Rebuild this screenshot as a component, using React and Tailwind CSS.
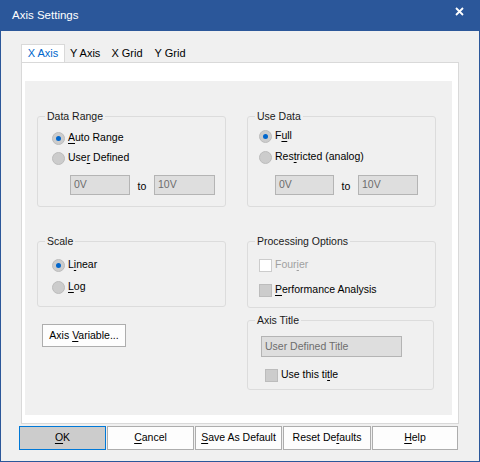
import React from 'react';

const font = { fontFamily: '"Liberation Sans", Arial, sans-serif' };

// label with one underlined access key
function Mn({ text, at }) {
    return (
        <span>
            {text.slice(0, at)}
            <span className="underline underline-offset-[2px] decoration-[1px]">{text[at]}</span>
            {text.slice(at + 1)}
        </span>
    );
}

function Radio({ checked, text, at }) {
    return (
        <div className="flex h-[16px] items-center gap-[3px]">
            <span className="flex h-[13px] w-[13px] items-center justify-center rounded-full border border-[#bcbcbc] bg-[#cccccc]">
                {checked && <span className="h-[5px] w-[5px] rounded-full bg-[#0066cc]"></span>}
            </span>
            <Mn text={text} at={at} />
        </div>
    );
}

function Check({ text, at, disabled }) {
    return (
        <div className={`flex h-[16px] items-center gap-[3px] ${disabled ? 'text-[#a0a0a0]' : 'text-black'}`}>
            <span className={`h-[13px] w-[13px] border ${disabled ? 'border-[#cccccc] bg-white' : 'border-[#bcbcbc] bg-[#cccccc]'}`}></span>
            <Mn text={text} at={at} />
        </div>
    );
}

// group box: caption sits over the top border
function Group({ title, className, children }) {
    return (
        <div className={`relative rounded-[3px] border border-[#dcdcdc] ${className}`}>
            <span className="absolute left-[7px] top-[-7px] bg-[#f0f0f0] px-[2px] leading-[13px] text-[#1a1a1a]">{title}</span>
            {children}
        </div>
    );
}

function Field({ value, w }) {
    return (
        <div className={`flex h-[20px] items-center border border-[#b4b4b4] bg-[#dedede] pl-[3px] text-[#6d6d6d] ${w}`}>
            {value}
        </div>
    );
}

function Btn({ text, at, primary, w }) {
    return (
        <button
            className={`flex h-[24px] items-center justify-center border ${w} ${primary ? 'border-[#0078d7] bg-[#cccccc]' : 'border-[#adadad] bg-[#fdfdfd]'}`}
        >
            <Mn text={text} at={at} />
        </button>
    );
}

export default function App() {
    return (
        <div className="flex h-[462px] w-[480px] flex-col bg-[#2b579a] px-[1px] pb-[1px] text-[10.5px] text-black" style={font}>
            {/* title bar */}
            <div className="flex h-[31px] items-center justify-between pl-[11px] pr-[15px] text-[11.5px] text-white">
                <span>Axis Settings</span>
                <svg width="9" height="9" viewBox="0 0 9 9" className="mt-[-8px]">
                    <path d="M1 1 L8 8 M8 1 L1 8" stroke="white" strokeWidth="1.8" />
                </svg>
            </div>

            <div className="flex flex-1 flex-col bg-[#f0f0f0]">
                {/* tabs */}
                <div className="mt-[13px] flex h-[18px] pl-[20px] text-[11px]">
                    <div className="flex w-[44px] items-center justify-center border border-b-0 border-[#d9d9d9] bg-white text-[#0066cc]">X Axis</div>
                    <div className="flex items-center px-[5px]">Y Axis</div>
                    <div className="flex items-center px-[6px]">X Grid</div>
                    <div className="flex items-center px-[6px]">Y Grid</div>
                </div>

                {/* tab page */}
                <div className="ml-[20px] flex h-[362px] w-[438px] border border-[#d9d9d9] bg-white pb-[8px] pl-[3px] pr-[6px] pt-[18px]">
                    <div className="flex flex-1 gap-[21px] bg-[#f0f0f0] pl-[12px] pt-[35px]">
                        {/* left column */}
                        <div className="flex w-[189px] flex-col">
                            <Group title="Data Range" className="pb-[11px] pl-[14px] pt-[13px]">
                                <div className="flex flex-col gap-[4px]">
                                    <Radio checked text="Auto Range" at={0} />
                                    <Radio text="User Defined" at={3} />
                                </div>
                                <div className="ml-[18px] mt-[9px] flex items-center">
                                    <Field value="0V" w="w-[60px]" />
                                    <span className="w-[24px] pt-[3px] text-center">to</span>
                                    <Field value="10V" w="w-[61px]" />
                                </div>
                            </Group>

                            <Group title="Scale" className="mt-[34px] pb-[11px] pl-[14px] pt-[15px]">
                                <div className="flex flex-col gap-[6px]">
                                    <Radio checked text="Linear" at={1} />
                                    <Radio text="Log" at={0} />
                                </div>
                            </Group>

                            <button className="ml-[5px] mt-[17px] flex h-[23px] w-[84px] items-center justify-center border border-[#adadad] bg-[#fdfdfd]">
                                <Mn text="Axis Variable..." at={5} />
                            </button>
                        </div>

                        {/* right column */}
                        <div className="flex w-[189px] flex-col">
                            <Group title="Use Data" className="pb-[11px] pl-[11px] pt-[11px]">
                                <div className="flex flex-col gap-[5px]">
                                    <Radio checked text="Full" at={1} />
                                    <Radio text="Restricted (analog)" at={3} />
                                </div>
                                <div className="ml-[16px] mt-[10px] flex items-center">
                                    <Field value="0V" w="w-[59px]" />
                                    <span className="w-[24px] pt-[3px] text-center">to</span>
                                    <Field value="10V" w="w-[60px]" />
                                </div>
                            </Group>

                            <Group title="Processing Options" className="mt-[34px] pb-[9px] pl-[11px] pt-[15px]">
                                <div className="flex flex-col gap-[9px]">
                                    <Check disabled text="Fourier" at={4} />
                                    <Check text="Performance Analysis" at={0} />
                                </div>
                            </Group>

                            <Group title="Axis Title" className="mt-[12px] w-[187px] pb-[6px] pl-[13px] pt-[15px]">
                                <div className="flex h-[21px] w-[141px] items-center border border-[#b4b4b4] bg-[#dedede] pl-[3px] text-[#6d6d6d]">
                                    User Defined Title
                                </div>
                                <div className="ml-[4px] mt-[10px]">
                                    <Check text="Use this title" at={11} />
                                </div>
                            </Group>
                        </div>
                    </div>
                </div>

                {/* dialog buttons */}
                <div className="mt-[2px] flex gap-[1px] pl-[18px]">
                    <Btn primary text="OK" at={0} w="w-[87px]" />
                    <Btn text="Cancel" at={0} w="w-[87px]" />
                    <Btn text="Save As Default" at={0} w="w-[87px]" />
                    <Btn text="Reset Defaults" at={8} w="w-[88px]" />
                    <Btn text="Help" at={0} w="w-[86px]" />
                </div>
            </div>
        </div>
    );
}
